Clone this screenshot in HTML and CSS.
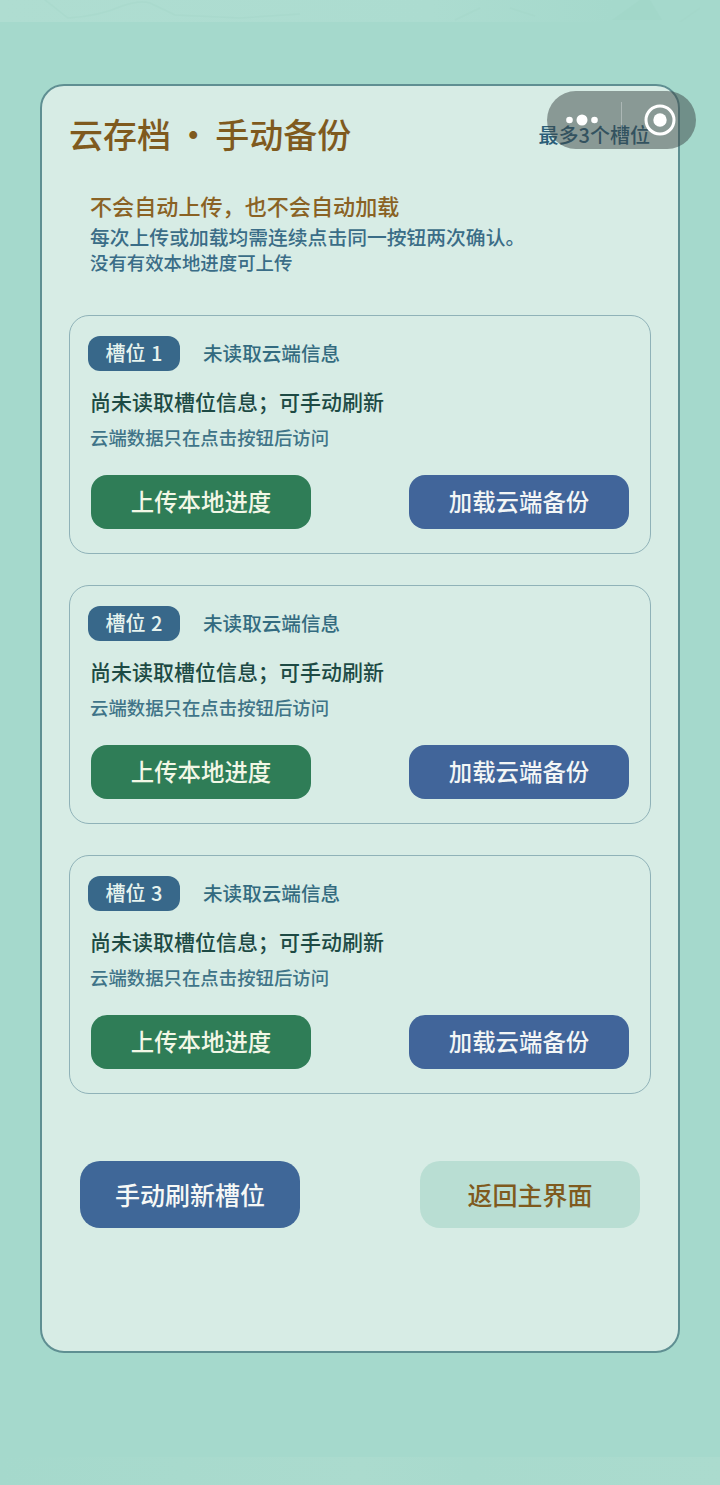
FILE: index.html
```html
<!DOCTYPE html>
<html lang="zh-CN">
<head>
  <meta charset="UTF-8" />
  <meta name="viewport" content="width=device-width, initial-scale=1.0" />
  <title>云存档</title>
  <link rel="stylesheet" href="styles.css">
</head>
<body>
  <div class="top-strip">
    <svg class="strip-art" width="720" height="22" viewBox="0 0 720 22">
      <path d="M45 0 L68 18 Q100 16 122 6 Q140 0 150 3 L175 15 L240 18 L300 14" fill="none" stroke="#a3d6c8" stroke-width="1.500"/>
      <path d="M455 20 L480 8 M510 8 L535 16 M680 22 L700 8" fill="none" stroke="#a3d6c8" stroke-width="1.500"/>
      <path d="M612 20 L640 0 L650 0 L662 20 Z" fill="#9fd5c6"/>
    </svg>
  </div>

  <div class="panel">
    <div class="panel-head">
      <h1 class="panel-title">云存档 · 手动备份</h1>
      <span class="panel-limit">最多3个槽位</span>
    </div>

    <div class="notes">
      <p class="note-main">不会自动上传，也不会自动加载</p>
      <p class="note-sub">每次上传或加载均需连续点击同一按钮两次确认。</p>
      <p class="note-small">没有有效本地进度可上传</p>
    </div>

    <div class="slots">
      <div class="slot">
        <div class="slot-head">
          <span class="slot-tag">槽位 1</span>
          <span class="slot-state">未读取云端信息</span>
        </div>
        <p class="slot-info">尚未读取槽位信息；可手动刷新</p>
        <p class="slot-hint">云端数据只在点击按钮后访问</p>
        <div class="slot-buttons">
          <a href="#" class="btn btn-upload">上传本地进度</a>
          <a href="#" class="btn btn-load">加载云端备份</a>
        </div>
      </div>

      <div class="slot">
        <div class="slot-head">
          <span class="slot-tag">槽位 2</span>
          <span class="slot-state">未读取云端信息</span>
        </div>
        <p class="slot-info">尚未读取槽位信息；可手动刷新</p>
        <p class="slot-hint">云端数据只在点击按钮后访问</p>
        <div class="slot-buttons">
          <a href="#" class="btn btn-upload">上传本地进度</a>
          <a href="#" class="btn btn-load">加载云端备份</a>
        </div>
      </div>

      <div class="slot">
        <div class="slot-head">
          <span class="slot-tag">槽位 3</span>
          <span class="slot-state">未读取云端信息</span>
        </div>
        <p class="slot-info">尚未读取槽位信息；可手动刷新</p>
        <p class="slot-hint">云端数据只在点击按钮后访问</p>
        <div class="slot-buttons">
          <a href="#" class="btn btn-upload">上传本地进度</a>
          <a href="#" class="btn btn-load">加载云端备份</a>
        </div>
      </div>
    </div>

    <div class="panel-buttons">
      <a href="#" class="btn-big btn-refresh">手动刷新槽位</a>
      <a href="#" class="btn-big btn-back">返回主界面</a>
    </div>
  </div>

  <!-- 小程序胶囊按钮 -->
  <div class="capsule">
    <svg class="capsule-dots" width="36" height="14" viewBox="0 0 36 14">
      <circle cx="5.500" cy="7" r="3.300" fill="#fff"/>
      <circle cx="18" cy="7" r="5.500" fill="#fff"/>
      <circle cx="30.500" cy="7" r="3.300" fill="#fff"/>
    </svg>
    <span class="capsule-line"></span>
    <svg class="capsule-target" width="34" height="34" viewBox="0 0 34 34">
      <circle cx="17" cy="17" r="14" fill="none" stroke="#fff" stroke-width="3"/>
      <circle cx="17" cy="17" r="6.700" fill="#fff"/>
    </svg>
  </div>

  <div class="bottom-strip"></div>
</body>
</html>
```

FILE: styles.css
```css
html, body {
  height: 100%;
}
body {
  position: relative;
  margin: 0;
  height: 1485px;
  overflow: hidden;
  background: #a5d9cc;
  font-family: "Noto Sans CJK SC", "Noto Sans", sans-serif;
  font-weight: 500;
}
p, h1 {
  margin: 0;
}
a {
  text-decoration: none;
}

/* 顶部和底部的浅色条 */
.top-strip {
  height: 22px;
  background: linear-gradient(90deg, #afddd1, #acdcd0 60%, #a5d9cc 85%);
}
.strip-art {
  display: block;
  opacity: 0.35;
}
.bottom-strip {
  position: absolute;
  left: 0;
  right: 0;
  bottom: 0;
  height: 28px;
  background: linear-gradient(90deg, #a5d9cc, #abdbce 50%, #a8dacd 65%, #abdbce);
}

/* 主面板 */
.panel {
  box-sizing: border-box;
  width: 640px;
  height: 1269px;
  margin: 62px 0 0 40px;
  padding: 0 27px;
  background: #d7ece5;
  border: 2px solid #5f8f92;
  border-radius: 24px;
}
.panel-head {
  display: flex;
  justify-content: space-between;
  align-items: center;
  height: 96px;
}
.panel-title {
  font-size: 34px;
  font-weight: 500;
  line-height: 96px;
  word-spacing: -2.500px;
  color: #7f5a1e;
}
.panel-limit {
  margin-right: 1px;
  font-size: 20px;
  color: #2b5f78;
}

/* 说明文字 */
.notes {
  padding: 9px 0 0 21px;
}
.note-main {
  font-size: 22.100px;
  line-height: 28px;
  color: #8a6224;
}
.note-sub {
  margin-top: 4px;
  font-size: 19.800px;
  line-height: 27px;
  color: #3a6d87;
}
.note-small {
  font-size: 18.400px;
  line-height: 25px;
  color: #3a6d87;
}

/* 槽位卡片 */
.slots {
  display: flex;
  flex-direction: column;
  gap: 31px;
  margin-top: 40px;
}
.slot {
  box-sizing: border-box;
  height: 239px;
  padding: 20px 21px 0 18px;
  border: 1px solid #8fb2b8;
  border-radius: 20px;
}
.slot-head {
  display: flex;
  align-items: center;
  gap: 23px;
}
.slot-tag {
  box-sizing: border-box;
  width: 92px;
  height: 35px;
  line-height: 34px;
  text-align: center;
  font-size: 20px;
  word-spacing: 1px;
  color: #e6f3ee;
  background: #38688a;
  border-radius: 12px;
}
.slot-state {
  margin-top: -2px;
  font-size: 19.600px;
  color: #336b80;
}
.slot-info {
  margin: 14px 0 0 2px;
  font-size: 21px;
  line-height: 32px;
  color: #1d4a44;
}
.slot-hint {
  margin: 7px 0 0 2px;
  font-size: 18.400px;
  line-height: 26px;
  color: #3f7488;
}
.slot-buttons {
  display: flex;
  justify-content: space-between;
  margin: 25px 0 0 3px;
}
.btn {
  width: 220px;
  height: 54px;
  line-height: 53px;
  text-align: center;
  font-size: 23.400px;
  border-radius: 16px;
}
.btn-upload {
  background: #2f7d57;
  color: #f2f7e6;
}
.btn-load {
  background: #41659a;
  color: #f3f6f6;
}

/* 底部按钮 */
.panel-buttons {
  display: flex;
  justify-content: space-between;
  margin: 67px 11px 0;
}
.btn-big {
  width: 220px;
  height: 67px;
  line-height: 66px;
  text-align: center;
  font-size: 25px;
  border-radius: 20px;
}
.btn-refresh {
  background: #3f6798;
  color: #f6f8f6;
}
.btn-back {
  background: #b9ded3;
  color: #7f5a1e;
}

/* 胶囊按钮盖在面板上面 */
.capsule {
  position: absolute;
  top: 91px;
  left: 547px;
  width: 149px;
  height: 58px;
  display: flex;
  align-items: center;
  background: rgba(60, 70, 70, 0.5);
  border-radius: 29px;
}
.capsule-dots {
  margin-left: 17px;
}
.capsule-line {
  width: 1px;
  height: 36px;
  margin-left: 21px;
  background: rgba(255, 255, 255, 0.3);
}
.capsule-target {
  margin-left: 21px;
}
```
